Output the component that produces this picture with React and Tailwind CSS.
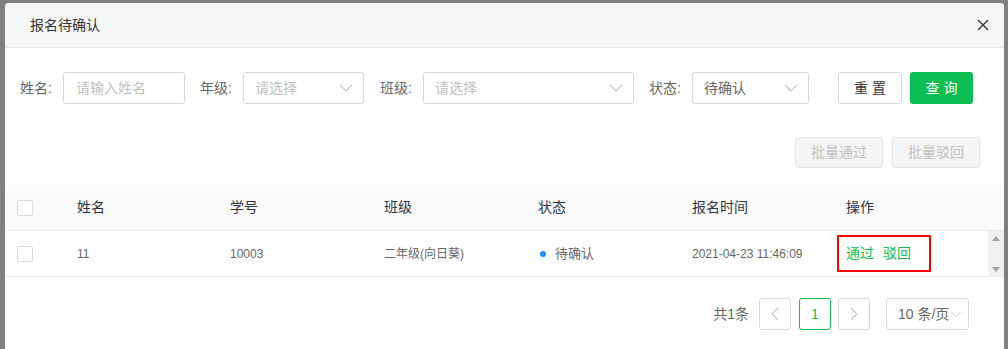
import React from 'react';

const Chevron = ({ w = 14 }) => (
  <svg width={w} height="8" viewBox="0 0 14 8" fill="none">
    <path d="M1 1l6 6 6-6" stroke="#c0c4cc" strokeWidth="1.1" />
  </svg>
);

const Label = ({ children }) => (
  <span className="w-[43px] shrink-0 text-[14px] text-[#666] whitespace-nowrap">{children}</span>
);

const Select = ({ width, value, placeholder }) => (
  <div
    className={`${width} h-[32px] border border-[#d9d9d9] rounded-[3px] flex items-center justify-between pl-[11px] pr-[10px] bg-white`}
  >
    {value ? (
      <span className="text-[14px] text-[#666]">{value}</span>
    ) : (
      <span className="text-[14px] text-[#bfbfbf]">{placeholder}</span>
    )}
    <Chevron />
  </div>
);

const Checkbox = () => (
  <div className="w-[16px] h-[16px] border border-[#d9d9d9] rounded-[2px] bg-white" />
);

const columns = ['姓名', '学号', '班级', '状态', '报名时间', '操作'];

export default function App() {
  return (
    <div className="w-[1008px] h-[349px] overflow-hidden bg-[#808080] pl-[5px] pr-[4px] pt-[3px] font-['Liberation_Sans','Noto_Sans_CJK_SC',sans-serif]">
      <div className="bg-white rounded-t-[4px] h-[400px]">
        {/* header */}
        <div className="h-[45px] bg-[#f5f7f7] border-b border-[#e6e6e6] rounded-t-[4px] flex items-center justify-between pl-[25px] pr-[14px]">
          <span className="text-[14px] text-[#333]">报名待确认</span>
          <svg width="14" height="14" viewBox="0 0 14 14" fill="none">
            <path d="M2 2l10 10M12 2L2 12" stroke="#333" strokeWidth="1.4" />
          </svg>
        </div>

        {/* filters */}
        <div className="pt-[24px] pl-[15px] flex items-center">
          <Label>姓名:</Label>
          <div className="w-[122px] h-[32px] border border-[#d9d9d9] rounded-[3px] flex items-center pl-[12px]">
            <span className="text-[14px] text-[#bfbfbf]">请输入姓名</span>
          </div>
          <div className="ml-[15px] flex items-center">
            <Label>年级:</Label>
            <Select width="w-[121px]" placeholder="请选择" />
          </div>
          <div className="ml-[16px] flex items-center">
            <Label>班级:</Label>
            <Select width="w-[211px]" placeholder="请选择" />
          </div>
          <div className="ml-[15px] flex items-center">
            <Label>状态:</Label>
            <Select width="w-[117px]" value="待确认" />
          </div>
          <button className="ml-[29px] w-[64px] h-[32px] border border-[#d9d9d9] rounded-[3px] text-[14px] text-[#333] tracking-[4px] pl-[4px] bg-white">
            重置
          </button>
          <button className="ml-[8px] w-[63px] h-[32px] rounded-[3px] text-[14px] text-white tracking-[4px] pl-[4px] bg-[#0cbe51]">
            查询
          </button>
        </div>

        {/* batch actions */}
        <div className="mt-[33px] flex justify-end pr-[24px] gap-[9px]">
          <button className="w-[88px] h-[31px] border border-[#e4e4e4] rounded-[3px] bg-[#f5f5f5] text-[14px] text-[#bfbfbf]">
            批量通过
          </button>
          <button className="w-[88px] h-[31px] border border-[#e4e4e4] rounded-[3px] bg-[#f5f5f5] text-[14px] text-[#bfbfbf]">
            批量驳回
          </button>
        </div>

        {/* table */}
        <div className="mt-[17px]">
          <div className="h-[46px] bg-[#fafafa] border-b border-[#e8e8e8] grid grid-cols-[57px_153px_154px_154px_154px_154px_1fr] items-center">
            <div className="pl-[12px]">
              <Checkbox />
            </div>
            {columns.map((c) => (
              <div key={c} className="pl-[15px] text-[14px] text-[#2c3445]">
                {c}
              </div>
            ))}
          </div>
          <div className="flex">
            <div className="flex-1 h-[46px] border-b border-[#e8e8e8] grid grid-cols-[57px_153px_154px_154px_154px_154px_1fr] items-center">
              <div className="pl-[12px]">
                <Checkbox />
              </div>
              <div className="pl-[15px] text-[12px] text-[#666]">11</div>
              <div className="pl-[15px] text-[12px] text-[#666]">10003</div>
              <div className="pl-[15px] text-[12px] text-[#666]">二年级(向日葵)</div>
              <div className="pl-[17px] flex items-center">
                <span className="w-[6px] h-[6px] rounded-full bg-[#1890ff] mr-[9px]" />
                <span className="text-[13px] text-[#666]">待确认</span>
              </div>
              <div className="pl-[15px] text-[12px] text-[#666]">2021-04-23 11:46:09</div>
              <div className="pl-[6px]">
                <div className="w-[94px] h-[37px] border-2 border-[#f00] flex items-center pl-[7px] gap-[9px] text-[14px] text-[#0cbe51]">
                  <span>通过</span>
                  <span>驳回</span>
                </div>
              </div>
            </div>
            <div className="w-[16px] h-[46px] bg-[#f1f1f1] flex flex-col items-center justify-between py-[5px]">
              <svg width="8" height="5" viewBox="0 0 8 5">
                <path d="M0 5L4 0l4 5z" fill="#a3a3a3" />
              </svg>
              <svg width="8" height="5" viewBox="0 0 8 5">
                <path d="M0 0h8L4 5z" fill="#a3a3a3" />
              </svg>
            </div>
          </div>
        </div>

        {/* pagination */}
        <div className="mt-[21px] flex items-center justify-end pr-[35px]">
          <span className="text-[14px] text-[#666] mr-[10px]">共1条</span>
          <div className="w-[32px] h-[32px] border border-[#d9d9d9] rounded-[3px] flex items-center justify-center">
            <svg width="8" height="14" viewBox="0 0 8 14" fill="none">
              <path d="M7 1L1 7l6 6" stroke="#c0c4cc" strokeWidth="1.1" />
            </svg>
          </div>
          <div className="ml-[8px] w-[32px] h-[32px] border border-[#0cbe51] rounded-[3px] flex items-center justify-center text-[14px] text-[#0cbe51]">
            1
          </div>
          <div className="ml-[7px] w-[32px] h-[32px] border border-[#d9d9d9] rounded-[3px] flex items-center justify-center">
            <svg width="8" height="14" viewBox="0 0 8 14" fill="none">
              <path d="M1 1l6 6-6 6" stroke="#c0c4cc" strokeWidth="1.1" />
            </svg>
          </div>
          <div className="ml-[16px] w-[83px] h-[32px] border border-[#d9d9d9] rounded-[3px] flex items-center justify-between pl-[11px] pr-[6px]">
            <span className="text-[14px] text-[#666] whitespace-nowrap">10 条/页</span>
            <Chevron w={12} />
          </div>
        </div>
      </div>
    </div>
  );
}
